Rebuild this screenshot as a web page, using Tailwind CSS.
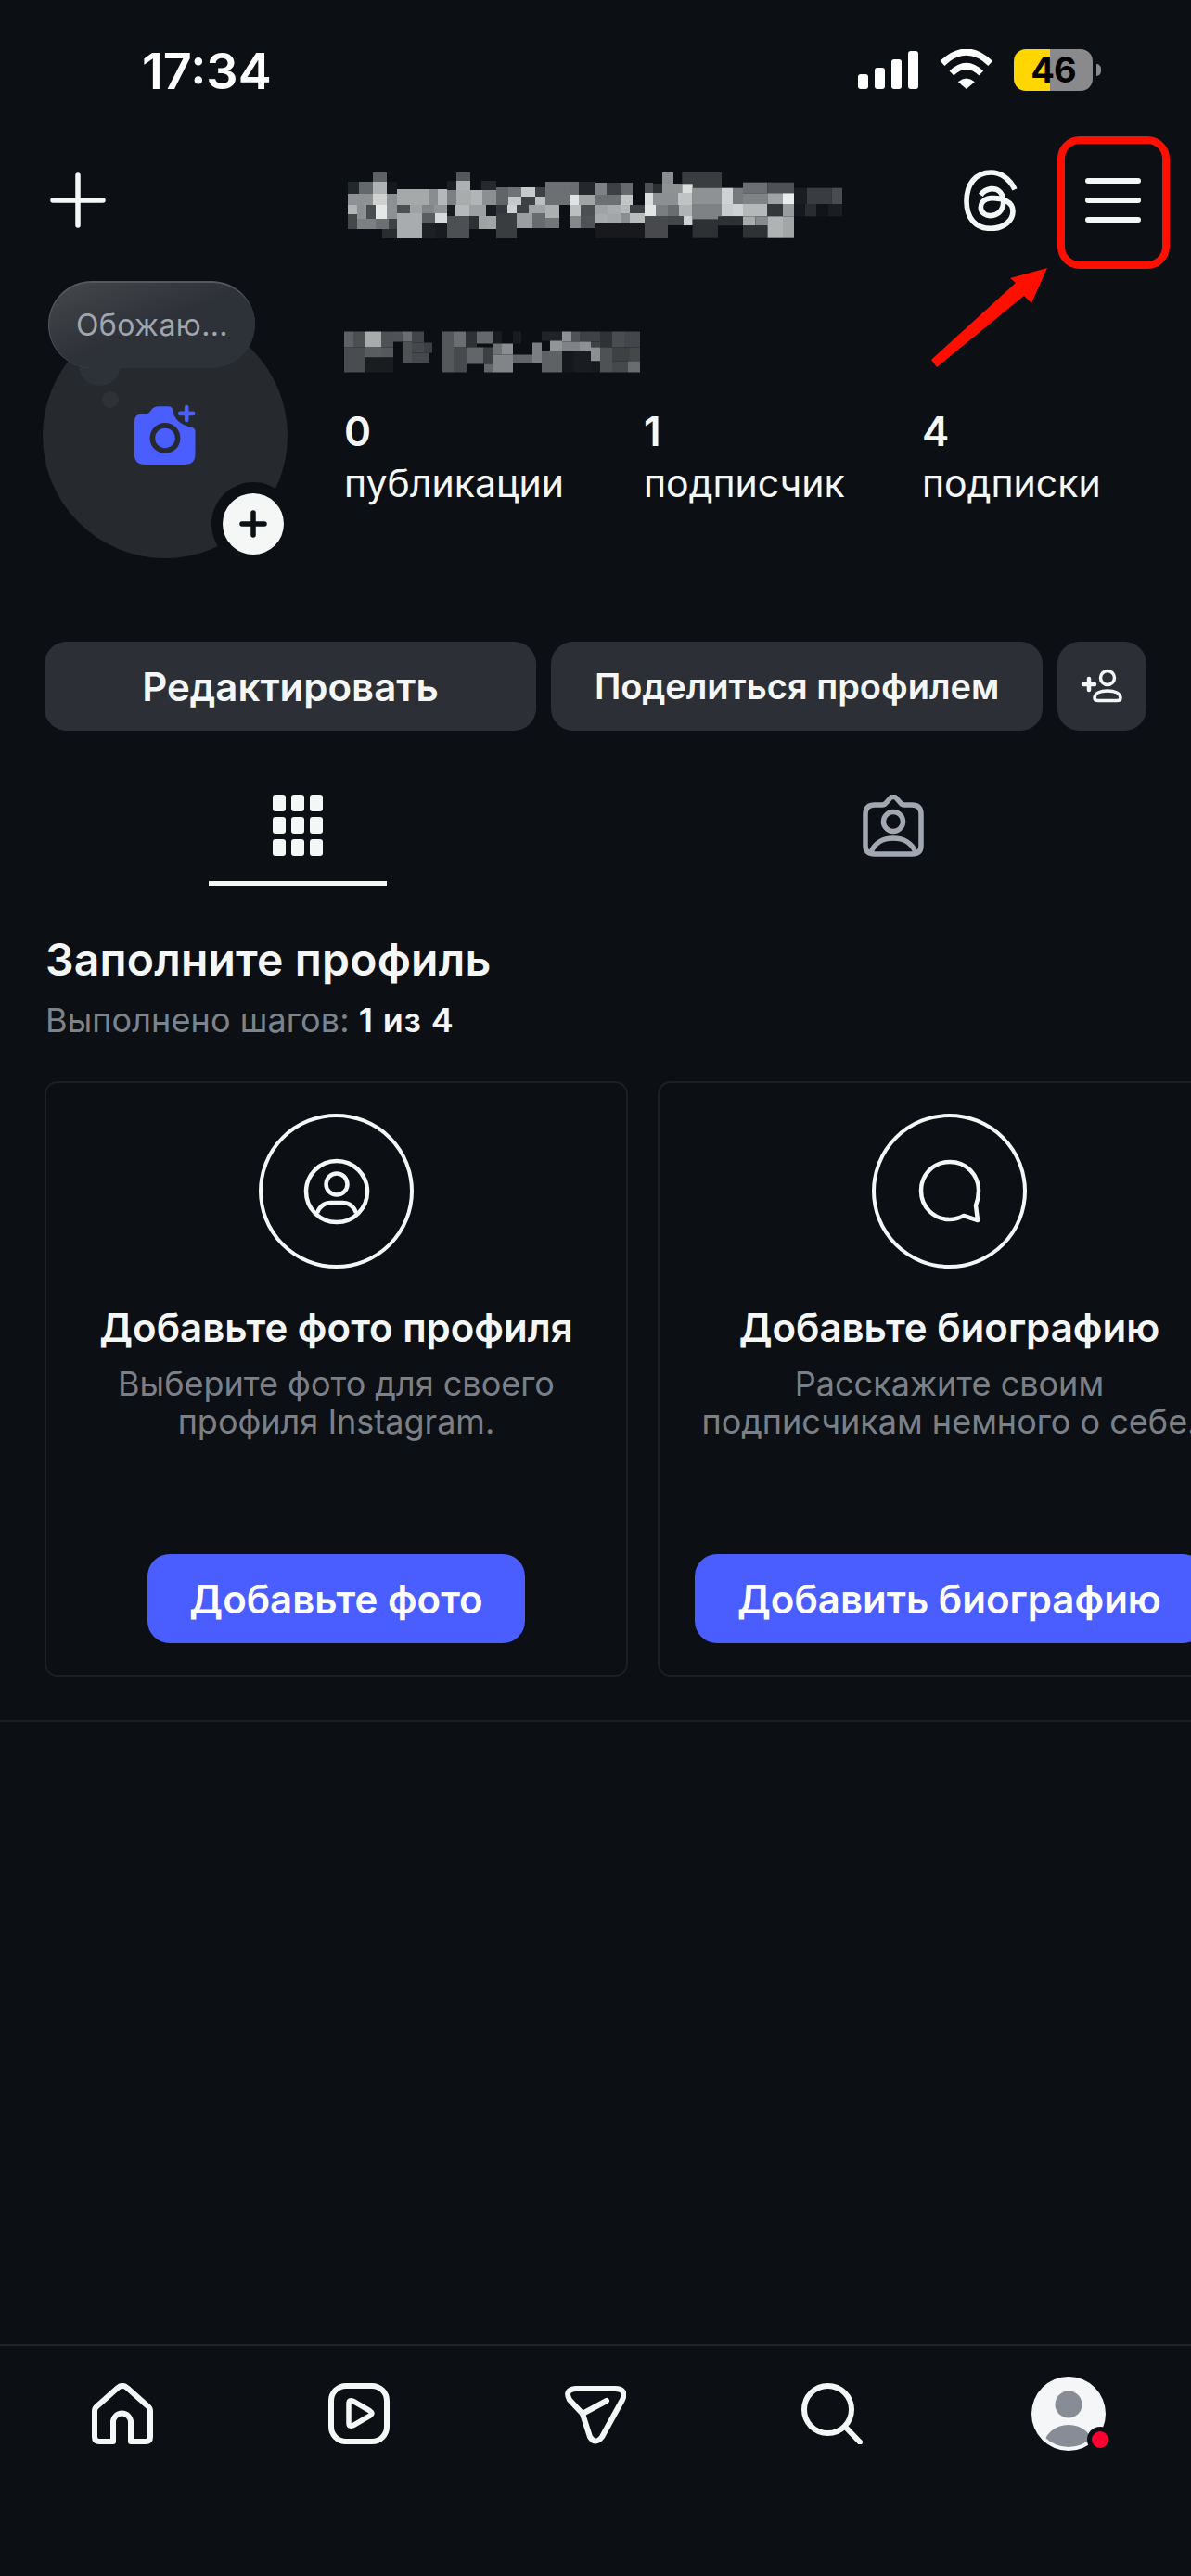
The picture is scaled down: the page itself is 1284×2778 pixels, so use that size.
<!DOCTYPE html>
<html lang="ru">
<head>
<meta charset="utf-8">
<script src="https://cdn.jsdelivr.net/npm/@tailwindcss/browser@4"></script>
</head>
<body class="bg-[#0c1014]">
<div class="relative w-[1284px] h-[2778px] overflow-hidden bg-[#0c1014] text-white flex flex-col font-[family-name:Inter]">

  <!-- status bar -->
  <div class="h-[154px] flex shrink-0">
    <div class="ml-[153px] mt-[46px] text-[54px] leading-[62px] font-semibold">17:34</div>
    <div class="ml-auto mr-[97px] mt-[53px] flex items-start">
      <svg class="mt-[2px]" width="65" height="41" viewBox="0 0 65 41" fill="#fff"><rect x="0" y="25" width="11" height="16" rx="3"/><rect x="18" y="18" width="11" height="23" rx="3"/><rect x="36" y="9" width="11" height="32" rx="3"/><rect x="54" y="0" width="11" height="41" rx="3"/></svg>
      <svg class="ml-[23px]" width="57" height="43" viewBox="338 100 172 129" fill="none" stroke="#fff"><path d="M347 146 Q425 72 503 146" stroke-width="21"/><path d="M377 178 Q425 132 473 178" stroke-width="21"/><path d="M398 206 Q425 184 452 206 L425 229 Z" fill="#fff" stroke="none"/></svg>
      <div class="ml-[23px] w-[85px] h-[45px] rounded-[13px] bg-[linear-gradient(90deg,#ffd600_39px,#8a8a8d_39px)] flex items-center justify-center text-black text-[38px] leading-[45px] font-bold tracking-[-1px]">46</div>
      <div class="ml-[4px] mt-[16px] w-[5px] h-[13px] rounded-r-full bg-[#8a8a8d]"></div>
    </div>
  </div>

  <!-- header -->
  <div class="h-[124px] flex items-center shrink-0">
    <svg class="ml-[54px]" width="60" height="60" viewBox="0 0 60 60" stroke="#f5f7f7" stroke-width="5.5" stroke-linecap="round"><path d="M30 3V57M3 30H57"/></svg>
    <svg class="ml-[261px] mt-[11px]" width="533" height="71" viewBox="105 78 1599 213">
      <g>
        <rect x="186" y="78" width="45" height="30" fill="#5f6264"/><rect x="105" y="108" width="36" height="39" fill="#23282c"/><rect x="141" y="108" width="45" height="39" fill="#65686a"/><rect x="186" y="108" width="45" height="39" fill="#b0b3b3"/><rect x="231" y="108" width="33" height="39" fill="#15191d"/>
        <rect x="105" y="147" width="81" height="36" fill="#8f9294"/><rect x="186" y="147" width="45" height="36" fill="#cfd1d1"/><rect x="231" y="147" width="33" height="36" fill="#8d9092"/><rect x="264" y="132" width="105" height="78" fill="#a6a9aa"/><rect x="369" y="132" width="27" height="51" fill="#8a8d8f"/><rect x="396" y="132" width="30" height="51" fill="#b5b8b8"/>
        <rect x="105" y="183" width="30" height="30" fill="#b2b4b5"/><rect x="135" y="183" width="30" height="45" fill="#8c8f90"/><rect x="165" y="183" width="30" height="45" fill="#4a4d50"/><rect x="195" y="183" width="36" height="45" fill="#e6e8e8"/><rect x="231" y="183" width="33" height="45" fill="#8d9092"/>
        <rect x="105" y="213" width="30" height="48" fill="#454749"/><rect x="135" y="228" width="60" height="33" fill="#7d8082"/><rect x="195" y="228" width="42" height="33" fill="#6d7072"/><rect x="237" y="228" width="27" height="33" fill="#3f4245"/>
        <rect x="264" y="183" width="42" height="27" fill="#4d5053"/><rect x="306" y="183" width="39" height="27" fill="#9fa2a4"/><rect x="345" y="183" width="39" height="27" fill="#828587"/><rect x="384" y="183" width="42" height="27" fill="#919495"/>
        <rect x="264" y="210" width="81" height="81" fill="#a9acae"/><rect x="345" y="210" width="42" height="33" fill="#5a5d60"/><rect x="387" y="210" width="39" height="33" fill="#d9dadb"/><rect x="216" y="261" width="48" height="30" fill="#2a2d30"/><rect x="345" y="243" width="42" height="48" fill="#1e2124"/><rect x="387" y="243" width="39" height="48" fill="#181b1f"/>
        <rect x="456" y="78" width="45" height="27" fill="#55585a"/><rect x="426" y="105" width="30" height="30" fill="#1b1f23"/><rect x="456" y="105" width="45" height="30" fill="#aeb1b2"/><rect x="537" y="105" width="48" height="30" fill="#27292c"/>
        <rect x="426" y="135" width="30" height="48" fill="#7d8082"/><rect x="456" y="135" width="48" height="48" fill="#a9acad"/><rect x="504" y="135" width="36" height="48" fill="#b2b5b5"/><rect x="540" y="135" width="45" height="48" fill="#8c8f91"/>
        <rect x="426" y="183" width="27" height="36" fill="#181c20"/><rect x="453" y="183" width="45" height="36" fill="#b6b8b9"/><rect x="498" y="183" width="54" height="36" fill="#9da0a2"/><rect x="552" y="183" width="33" height="36" fill="#181b1f"/>
        <rect x="426" y="219" width="72" height="72" fill="#4d5053"/><rect x="498" y="219" width="30" height="42" fill="#2e3134"/><rect x="528" y="219" width="27" height="42" fill="#9fa2a3"/><rect x="555" y="219" width="30" height="42" fill="#a2a5a6"/>
        <rect x="585" y="126" width="39" height="57" fill="#626567"/><rect x="624" y="126" width="42" height="30" fill="#707375"/><rect x="666" y="126" width="45" height="30" fill="#c8c9ca"/><rect x="711" y="126" width="33" height="30" fill="#3e4144"/><rect x="624" y="156" width="42" height="27" fill="#c5c7c8"/><rect x="666" y="156" width="45" height="27" fill="#3e4144"/><rect x="711" y="156" width="33" height="27" fill="#bcbfbf"/>
        <rect x="585" y="183" width="36" height="27" fill="#33363a"/><rect x="621" y="183" width="30" height="27" fill="#d0d1d2"/><rect x="651" y="183" width="39" height="27" fill="#3e4144"/><rect x="690" y="183" width="54" height="27" fill="#a1a4a5"/><rect x="585" y="210" width="66" height="81" fill="#3a3d40"/><rect x="651" y="210" width="51" height="48" fill="#9b9ea0"/><rect x="702" y="210" width="42" height="48" fill="#686b6d"/>
        <rect x="744" y="108" width="81" height="75" fill="#6d7072"/><rect x="825" y="108" width="27" height="42" fill="#6b6e70"/><rect x="852" y="108" width="54" height="42" fill="#25282b"/><rect x="744" y="183" width="45" height="42" fill="#adb0b1"/><rect x="744" y="225" width="45" height="33" fill="#737678"/><rect x="825" y="150" width="27" height="33" fill="#e1e2e3"/><rect x="852" y="150" width="54" height="33" fill="#a1a4a5"/>
        <rect x="822" y="183" width="36" height="36" fill="#bcbfc0"/><rect x="858" y="183" width="48" height="36" fill="#4c4f52"/><rect x="822" y="219" width="36" height="39" fill="#85888a"/><rect x="858" y="219" width="48" height="39" fill="#505356"/>
        <rect x="906" y="111" width="36" height="39" fill="#7f8284"/><rect x="942" y="111" width="45" height="39" fill="#3e4144"/><rect x="987" y="111" width="39" height="39" fill="#67696c"/><rect x="906" y="150" width="81" height="33" fill="#6d7072"/><rect x="987" y="150" width="39" height="33" fill="#c3c5c6"/>
        <rect x="906" y="183" width="39" height="30" fill="#a0a3a5"/><rect x="945" y="183" width="42" height="30" fill="#a9abad"/><rect x="987" y="183" width="30" height="27" fill="#b5b7b8"/><rect x="1017" y="183" width="48" height="27" fill="#3e4144"/><rect x="906" y="213" width="39" height="30" fill="#a8aaac"/><rect x="945" y="213" width="42" height="30" fill="#a3a6a8"/><rect x="987" y="210" width="30" height="33" fill="#8b8e90"/><rect x="1017" y="210" width="48" height="33" fill="#babdbe"/><rect x="906" y="243" width="159" height="48" fill="#17191d"/>
        <rect x="1065" y="111" width="27" height="33" fill="#4e5154"/><rect x="1092" y="114" width="30" height="30" fill="#2c2f32"/><rect x="1122" y="78" width="36" height="36" fill="#8b8e90"/><rect x="1122" y="114" width="64" height="30" fill="#8f9293"/><rect x="1186" y="78" width="128" height="50" fill="#3a3d40"/><rect x="1186" y="115" width="34" height="30" fill="#dcdddd"/>
        <rect x="1065" y="144" width="27" height="39" fill="#dcdddd"/><rect x="1092" y="144" width="81" height="39" fill="#8d9092"/><rect x="1173" y="144" width="47" height="39" fill="#c0c2c3"/><rect x="1065" y="183" width="36" height="36" fill="#e3e4e4"/><rect x="1101" y="183" width="39" height="36" fill="#7b7e80"/><rect x="1140" y="183" width="36" height="36" fill="#6a6d6f"/><rect x="1176" y="183" width="44" height="36" fill="#b0b3b4"/>
        <rect x="1065" y="219" width="75" height="72" fill="#47494c"/><rect x="1140" y="219" width="51" height="30" fill="#444649"/><rect x="1191" y="219" width="29" height="30" fill="#d0d1d2"/>
        <rect x="1220" y="128" width="94" height="52" fill="#8f9294"/><rect x="1314" y="128" width="36" height="52" fill="#d0d1d2"/><rect x="1350" y="128" width="33" height="52" fill="#777a7c"/><rect x="1383" y="110" width="79" height="35" fill="#6d7072"/><rect x="1462" y="110" width="86" height="35" fill="#4f5255"/><rect x="1383" y="145" width="79" height="35" fill="#808385"/><rect x="1462" y="145" width="50" height="35" fill="#a0a3a5"/><rect x="1512" y="145" width="36" height="35" fill="#eceded"/>
        <rect x="1220" y="180" width="94" height="50" fill="#7f8284"/><rect x="1314" y="180" width="36" height="40" fill="#c9cbcc"/><rect x="1350" y="180" width="33" height="40" fill="#d0d1d2"/><rect x="1383" y="180" width="79" height="40" fill="#b5b8b9"/><rect x="1462" y="180" width="50" height="40" fill="#333639"/><rect x="1512" y="180" width="36" height="40" fill="#999c9e"/>
        <rect x="1220" y="230" width="82" height="60" fill="#2e3134"/><rect x="1302" y="220" width="81" height="30" fill="#2e3134"/><rect x="1383" y="220" width="40" height="30" fill="#a8abac"/><rect x="1423" y="220" width="39" height="30" fill="#888b8d"/><rect x="1462" y="220" width="50" height="70" fill="#b0b3b4"/><rect x="1512" y="220" width="36" height="70" fill="#a3a6a7"/><rect x="1383" y="250" width="79" height="40" fill="#2f3235"/>
        <rect x="1548" y="128" width="42" height="52" fill="#1a1d21"/><rect x="1590" y="128" width="80" height="52" fill="#3a3d40"/><rect x="1670" y="128" width="34" height="52" fill="#4a4d50"/><rect x="1548" y="180" width="36" height="40" fill="#15181c"/><rect x="1584" y="180" width="36" height="40" fill="#2a2d30"/><rect x="1620" y="180" width="38" height="40" fill="#111418"/><rect x="1658" y="180" width="46" height="40" fill="#1a1d21"/>
      </g>
    </svg>
    <svg class="ml-[131px]" width="58" height="66" viewBox="418 488 172 198" fill="none" stroke="#f5f7f7" stroke-width="17"><path d="M582 552 C565 515 535 497 505 497 C455 497 426 535 426 590 C426 645 455 678 505 678 C550 678 576 650 576 622 C576 590 540 578 505 580 C480 582 472 598 472 610 C472 628 490 640 510 636 C535 632 548 610 545 585 C542 560 525 548 505 550 C490 552 480 558 472 570"/></svg>
    <div class="ml-[73px] w-[60px] flex flex-col gap-[15px]">
      <div class="h-[6px] rounded-full bg-[#f5f7f7]"></div>
      <div class="h-[6px] rounded-full bg-[#f5f7f7]"></div>
      <div class="h-[6px] rounded-full bg-[#f5f7f7]"></div>
    </div>
  </div>

  <!-- profile -->
  <div class="h-[414px] flex items-start shrink-0">
    <div class="relative ml-[46px] mt-[60px] w-[264px] h-[264px] rounded-full bg-[#26292d] flex items-center justify-center">
      <svg class="mt-[-3px]" width="70" height="68" viewBox="370 465 210 205"><path fill="#4a5dff" d="M400 500 H412 Q420 500 428 490 Q436 475 455 475 H485 Q498 475 500 487 Q505 530 560 543 Q573 545 573 556 V630 Q573 664 538 664 H410 Q375 664 375 630 V525 Q375 500 400 500Z"/><circle cx="475" cy="578" r="41" fill="#4a5dff" stroke="#26292d" stroke-width="17"/><path d="M545 477V519M524 498H566" stroke="#4a5dff" stroke-width="14" stroke-linecap="round"/></svg>
      <div class="absolute left-[39px] top-[43px] w-[45px] h-[35px] rounded-b-full bg-[#2d3138]"></div>
      <div class="absolute left-[64px] top-[84px] w-[18px] h-[18px] rounded-full bg-[#2e3136]"></div>
      <div class="absolute left-[6px] top-[-35px] w-[223px] h-[94px] rounded-[47px] border-t-2 border-l border-[#55585c] bg-linear-to-br from-[#45484c] via-[#2e3238] to-[#2d3138] flex items-center justify-center text-[#a0a6ae] text-[32px] tracking-[0.4px]">Обожаю...</div>
      <div class="absolute left-[182px] top-[182px] w-[90px] h-[90px] rounded-full bg-[#0c1014] flex items-center justify-center">
        <div class="w-[66px] h-[66px] rounded-full bg-[#f5f7f7] flex items-center justify-center">
          <svg width="30" height="30" viewBox="0 0 30 30" stroke="#0c1014" stroke-width="5.5" stroke-linecap="round"><path d="M15 3V27M3 15H27"/></svg>
        </div>
      </div>
    </div>
    <div class="ml-[61px] flex flex-col">
      <svg class="mt-[79px]" width="319" height="45" viewBox="93 594 957 132">
        <rect x="93" y="594" width="30" height="51" fill="#5f6265"/><rect x="123" y="594" width="36" height="51" fill="#4c4f52"/><rect x="159" y="594" width="54" height="51" fill="#a8abac"/><rect x="213" y="594" width="39" height="51" fill="#4f5255"/><rect x="252" y="594" width="30" height="33" fill="#505356"/><rect x="282" y="594" width="30" height="33" fill="#6c6f71"/><rect x="312" y="594" width="39" height="36" fill="#434649"/>
        <rect x="93" y="645" width="66" height="81" fill="#4a4d50"/><rect x="159" y="645" width="54" height="33" fill="#5a5d60"/><rect x="213" y="645" width="39" height="33" fill="#56595c"/><rect x="159" y="678" width="93" height="48" fill="#1a1d20"/><rect x="282" y="627" width="30" height="69" fill="#4f5255"/><rect x="312" y="630" width="39" height="33" fill="#46494c"/><rect x="351" y="630" width="27" height="33" fill="#3e4144"/><rect x="312" y="663" width="54" height="33" fill="#46494c"/>
        <rect x="411" y="594" width="36" height="132" fill="#55585a"/><rect x="447" y="594" width="39" height="51" fill="#6c6f71"/><rect x="486" y="594" width="36" height="51" fill="#2f3235"/><rect x="522" y="594" width="51" height="39" fill="#66696b"/><rect x="573" y="594" width="30" height="39" fill="#1a1d20"/><rect x="447" y="645" width="42" height="81" fill="#484b4e"/><rect x="489" y="645" width="54" height="54" fill="#636668"/><rect x="543" y="645" width="30" height="54" fill="#3e4144"/><rect x="573" y="633" width="30" height="36" fill="#707375"/><rect x="603" y="633" width="36" height="36" fill="#8b8e90"/>
        <rect x="573" y="669" width="66" height="57" fill="#828587"/><rect x="546" y="699" width="27" height="27" fill="#63666a"/><rect x="639" y="669" width="63" height="27" fill="#626568"/><rect x="702" y="630" width="30" height="66" fill="#7c7f81"/><rect x="639" y="594" width="27" height="39" fill="#1a1d20"/>
        <rect x="732" y="594" width="66" height="30" fill="#212427"/><rect x="798" y="594" width="30" height="33" fill="#8f9294"/><rect x="828" y="594" width="27" height="33" fill="#505356"/><rect x="855" y="594" width="66" height="33" fill="#3f4245"/><rect x="921" y="594" width="39" height="51" fill="#303336"/><rect x="960" y="594" width="39" height="51" fill="#4a4d50"/><rect x="999" y="594" width="51" height="51" fill="#43464a"/>
        <rect x="759" y="624" width="39" height="33" fill="#929597"/><rect x="798" y="627" width="57" height="30" fill="#808385"/><rect x="855" y="627" width="36" height="30" fill="#8f9294"/><rect x="891" y="627" width="30" height="18" fill="#3f4245"/><rect x="732" y="657" width="66" height="69" fill="#5f6265"/><rect x="798" y="657" width="39" height="69" fill="#14171b"/><rect x="837" y="657" width="54" height="69" fill="#191c20"/><rect x="891" y="645" width="30" height="45" fill="#8c8f91"/><rect x="891" y="690" width="30" height="36" fill="#17191d"/>
        <rect x="921" y="645" width="39" height="81" fill="#4f5255"/><rect x="960" y="645" width="57" height="45" fill="#3e4144"/><rect x="1017" y="645" width="33" height="45" fill="#454749"/><rect x="960" y="690" width="51" height="36" fill="#46494c"/><rect x="1011" y="690" width="39" height="36" fill="#6a6d6f"/>
      </svg>
      <div class="mt-[37px] flex text-[#f5f7f7]">
        <div class="w-[323px]"><div class="text-[44px] leading-[52px] font-semibold">0</div><div class="mt-[6px] text-[41px] leading-[48px]">публикации</div></div>
        <div class="w-[300px]"><div class="text-[44px] leading-[52px] font-semibold">1</div><div class="mt-[6px] text-[41px] leading-[48px]">подписчик</div></div>
        <div class="w-[200px]"><div class="text-[44px] leading-[52px] font-semibold">4</div><div class="mt-[6px] text-[41px] leading-[48px]">подписки</div></div>
      </div>
    </div>
  </div>

  <!-- action buttons -->
  <div class="px-[48px] flex gap-[16px] shrink-0 text-[#f5f7f7]">
    <div class="w-[531px] h-[96px] rounded-[24px] bg-[#2c3036] flex items-center justify-center text-[42px] font-semibold">Редактировать</div>
    <div class="w-[531px] h-[96px] rounded-[24px] bg-[#2c3036] flex items-center justify-center text-[38px] font-semibold">Поделиться профилем</div>
    <div class="w-[96px] h-[96px] rounded-[24px] bg-[#2c3036] flex items-center justify-center">
      <svg width="48" height="48" viewBox="0 0 48 48" fill="none" stroke="#f5f7f7" stroke-width="3.5"><circle cx="30" cy="15" r="7.5"/><path d="M16 37 C16 31 23 29 30 29 C37 29 44 31 44 37 C44 39 42 39.5 40 39.5 H20 C18 39.5 16 39 16 37 Z"/><path d="M4 22H16M10 16V28" stroke-width="4.5" stroke-linecap="round"/></svg>
    </div>
  </div>

  <!-- tabs -->
  <div class="h-[168px] grid grid-cols-2 shrink-0">
    <div class="flex flex-col items-center pt-[69px]">
      <div class="grid grid-cols-[14px_14px_14px] grid-rows-[18px_18px_18px] gap-[6px]">
        <div class="rounded-[3px] bg-[#f5f7f7]"></div><div class="rounded-[3px] bg-[#f5f7f7]"></div><div class="rounded-[3px] bg-[#f5f7f7]"></div>
        <div class="rounded-[3px] bg-[#f5f7f7]"></div><div class="rounded-[3px] bg-[#f5f7f7]"></div><div class="rounded-[3px] bg-[#f5f7f7]"></div>
        <div class="rounded-[3px] bg-[#f5f7f7]"></div><div class="rounded-[3px] bg-[#f5f7f7]"></div><div class="rounded-[3px] bg-[#f5f7f7]"></div>
      </div>
      <div class="mt-auto w-[192px] h-[6px] bg-[#f5f7f7]"></div>
    </div>
    <div class="flex flex-col items-center pt-[69px]">
      <svg width="66" height="67" viewBox="0 0 66 67" fill="none" stroke="#a1a8b1" stroke-width="5.5" stroke-linejoin="round"><path d="M3 21 Q3 11 13 11 H21 Q24 11 26 8 L30 3.5 Q33 0.5 36 3.5 L40 8 Q42 11 45 11 H53 Q63 11 63 21 V55 Q63 64 53 64 H13 Q3 64 3 55 Z"/><circle cx="33" cy="29" r="10.5"/><path d="M9 62 C13 52 22 47 33 47 C44 47 53 52 57 62"/></svg>
    </div>
  </div>

  <!-- complete profile -->
  <div class="px-[49px] shrink-0">
    <div class="mt-[50px] text-[48px] leading-[58px] font-semibold tracking-[0.2px] text-[#f5f7f7]">Заполните профиль</div>
    <div class="mt-[14px] text-[36px] leading-[44px] text-[#7d838b] tracking-[0.1px]">Выполнено шагов: <span class="font-semibold text-[#f5f7f7] tracking-[0.8px]">1 из 4</span></div>
  </div>

  <div class="mt-[44px] pl-[48px] flex gap-[32px] overflow-hidden shrink-0">
    <div class="w-[629px] h-[642px] shrink-0 rounded-[14px] border-2 border-[#1c2025] flex flex-col items-center pt-[33px] pb-[34px]">
      <div class="w-[167px] h-[167px] rounded-full border-4 border-[#f5f7f7] flex items-center justify-center">
        <svg width="72" height="74" viewBox="0 0 72 74" fill="none" stroke="#f5f7f7" stroke-width="4.5"><circle cx="36" cy="37" r="33"/><circle cx="36" cy="29" r="11.5"/><path d="M15 60 C18 52 24 49 30 49 H42 C48 49 54 52 57 60"/></svg>
      </div>
      <div class="mt-[39px] text-[42px] leading-[50px] font-semibold text-[#f5f7f7]">Добавьте фото профиля</div>
      <div class="mt-[15px] text-[36px] leading-[41px] text-[#7b8088] text-center">Выберите фото для своего<br>профиля Instagram.</div>
      <div class="mt-auto w-[407px] h-[96px] rounded-[24px] bg-[#4a5dff] flex items-center justify-center text-[42px] font-semibold">Добавьте фото</div>
    </div>
    <div class="w-[629px] h-[642px] shrink-0 rounded-[14px] border-2 border-[#1c2025] flex flex-col items-center pt-[33px] pb-[34px]">
      <div class="w-[167px] h-[167px] rounded-full border-4 border-[#f5f7f7] flex items-center justify-center">
        <svg width="68" height="70" viewBox="0 0 68 70" fill="none" stroke="#f5f7f7" stroke-width="4.5" stroke-linejoin="round"><path d="M34 3 C16 3 3 17 3 34 C3 52 17 65 34 65 C40 65 45 63 49 61 L64 66 L62 50 C64 45 65 40 65 34 C65 17 52 3 34 3 Z"/></svg>
      </div>
      <div class="mt-[39px] text-[42px] leading-[50px] font-semibold text-[#f5f7f7]">Добавьте биографию</div>
      <div class="mt-[15px] text-[36px] leading-[41px] text-[#7b8088] text-center whitespace-nowrap">Расскажите своим<br>подписчикам немного о себе.</div>
      <div class="mt-auto w-[550px] h-[96px] rounded-[24px] bg-[#4a5dff] flex items-center justify-center text-[42px] font-semibold whitespace-nowrap">Добавить биографию</div>
    </div>
  </div>

  <div class="mt-[47px] h-[2px] bg-[#1c2025] shrink-0"></div>
  <div class="flex-1"></div>

  <!-- bottom nav -->
  <div class="h-[250px] border-t-2 border-[#212428] shrink-0">
    <div class="h-[146px] grid grid-cols-[repeat(5,255px)] justify-center items-center justify-items-center">
      <svg width="66" height="66" viewBox="0 0 66 66" fill="none" stroke="#f5f7f7" stroke-width="6" stroke-linejoin="round"><path d="M3 30 Q3 27 5.5 25 L28 5 Q33 1 38 5 L60.5 25 Q63 27 63 30 V58 Q63 63 58 63 H42 V42 A9.5 9.5 0 0 0 23 42 V63 H8 Q3 63 3 58 Z"/></svg>
      <svg width="66" height="66" viewBox="0 0 66 66" fill="none" stroke="#f5f7f7" stroke-width="6" stroke-linejoin="round"><rect x="3" y="3" width="60" height="60" rx="16"/><path d="M22 22 Q22 17 27 19.5 L45 30 Q49 32.5 45 35 L27 45.5 Q22 48 22 43 Z" stroke-width="5.5"/></svg>
      <svg width="66" height="66" viewBox="0 0 66 66" fill="none" stroke="#f5f7f7" stroke-width="6" stroke-linejoin="round" stroke-linecap="round"><path d="M12 6 H54 Q67 6 62 18 L40 58 Q33 67 27 58 L19 33 L5 18 Q-1 7 12 6Z"/><path d="M19 33 L45 19"/></svg>
      <svg width="66" height="66" viewBox="0 0 66 66" fill="none" stroke="#f5f7f7" stroke-width="6" stroke-linecap="round"><circle cx="28.5" cy="28.5" r="25.5"/><path d="M47 47 L63 63.5"/></svg>
      <div class="relative w-[80px] h-[80px]">
        <svg width="80" height="80" viewBox="0 0 80 80"><defs><clipPath id="av"><circle cx="40" cy="40" r="36"/></clipPath></defs><circle cx="40" cy="40" r="40" fill="#f5f6f7"/><circle cx="40" cy="30" r="14.5" fill="#878c96"/><ellipse cx="40" cy="76" rx="27" ry="24" fill="#878c96" clip-path="url(#av)"/></svg>
        <div class="absolute left-[60px] top-[54px] w-[28px] h-[28px] rounded-full bg-[#0c1014] flex items-center justify-center">
          <div class="w-[18px] h-[18px] rounded-full bg-[#ff0033]"></div>
        </div>
      </div>
    </div>
  </div>

  <!-- annotation -->
  <div class="absolute left-[1140px] top-[147px] w-[121px] h-[143px] rounded-[24px] border-[8px] border-[#ff0f00]"></div>
  <svg class="absolute left-[1000px] top-[285px]" width="135" height="115" viewBox="1000 285 135 115"><polygon fill="#ff0f00" points="1129,289 1112,327 1104,319 1010,396 1004,388 1095,305 1089,300"/></svg>
</div>
</body>
</html>
